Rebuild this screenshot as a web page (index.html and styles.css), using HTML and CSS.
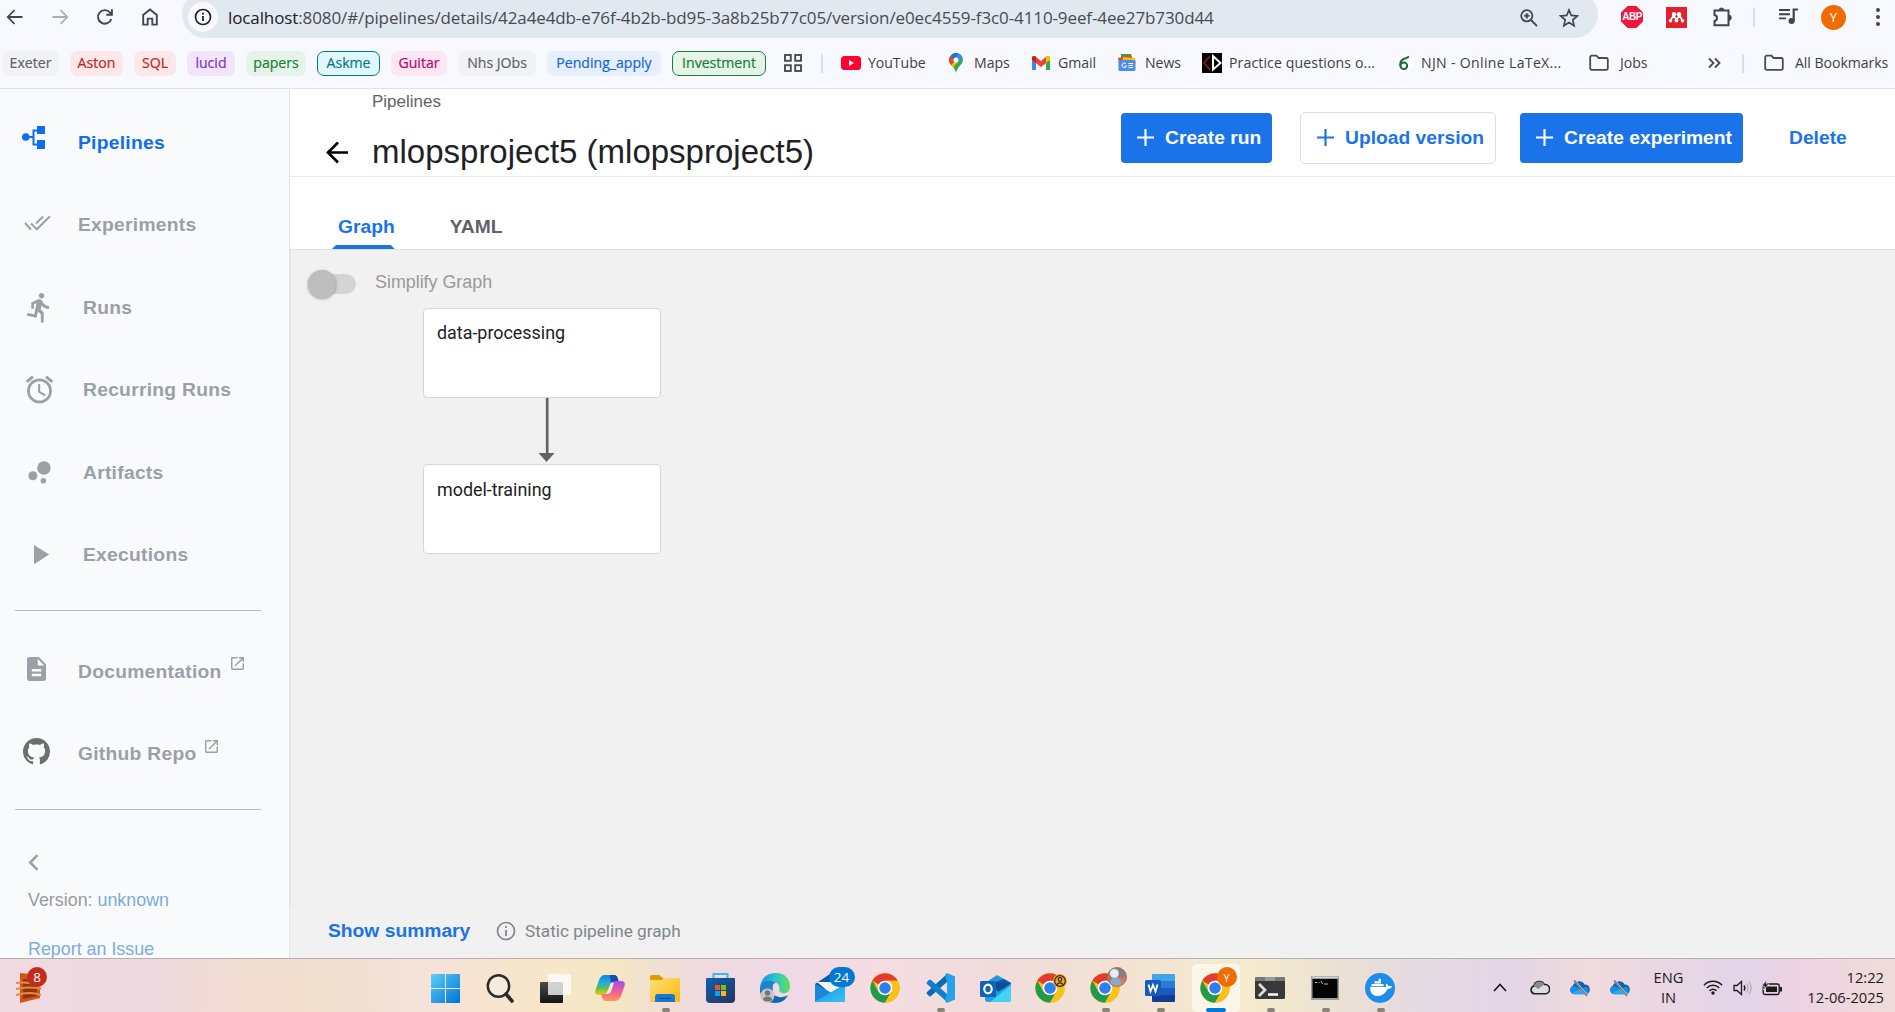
FILE: index.html
```html
<!DOCTYPE html>
<html lang="en">
<head>
<meta charset="utf-8">
<title>mlopsproject5 - Kubeflow Pipelines</title>
<link rel="stylesheet" href="styles.css">
</head>
<body>
<svg class="defs" width="0" height="0" aria-hidden="true">
  <defs>
    <linearGradient id="gWin" x1="0" y1="0" x2="1" y2="1"><stop offset="0" stop-color="#5ad2fb"/><stop offset="1" stop-color="#0072d2"/></linearGradient>
    <linearGradient id="gFolder" x1="0" y1="0" x2="1" y2="1"><stop offset="0" stop-color="#ffe07a"/><stop offset="1" stop-color="#fbb80c"/></linearGradient>
    <linearGradient id="gStore" x1="0" y1="0" x2="1" y2="1"><stop offset="0" stop-color="#0c62b0"/><stop offset="1" stop-color="#29335c"/></linearGradient>
    <linearGradient id="gDark" x1="0" y1="0" x2="0" y2="1"><stop offset="0" stop-color="#4a4a4a"/><stop offset="1" stop-color="#151515"/></linearGradient>
    <linearGradient id="gEdge" x1="0" y1="0" x2="1" y2="0"><stop offset="0" stop-color="#1590dd"/><stop offset=".5" stop-color="#2cc3d2"/><stop offset="1" stop-color="#62e052"/></linearGradient>
    <linearGradient id="gCopA" x1="0" y1="0" x2="0" y2="1"><stop offset="0" stop-color="#1584dc"/><stop offset=".35" stop-color="#18aee8"/><stop offset=".65" stop-color="#5cbb5a"/><stop offset="1" stop-color="#f6d200"/></linearGradient>
    <linearGradient id="gCopB" x1="0" y1="0" x2="0" y2="1"><stop offset="0" stop-color="#9a55ec"/><stop offset=".5" stop-color="#ee5a98"/><stop offset="1" stop-color="#fd9a5a"/></linearGradient>
    <linearGradient id="gMail" x1="0" y1="0" x2="1" y2="1"><stop offset="0" stop-color="#1d8fdf"/><stop offset="1" stop-color="#35c4f4"/></linearGradient>
    <symbol id="chrome" viewBox="0 0 48 48">
      <circle cx="24" cy="24" r="23.5" fill="#fbc116"/>
      <path d="M24 24 3.650 12.250A23.500 23.500 0 0 1 44.350 12.250H24z" fill="#e33b2e"/>
      <path d="M3.650 12.250A23.500 23.500 0 0 0 24 47.500L34.180 29.880 24 24 13.820 29.880z" fill="#229a4c"/>
      <path d="M24 12.250H44.350A23.500 23.500 0 0 1 24 47.500L34.180 29.880z" fill="#fbc116"/>
      <circle cx="24" cy="24" r="11.750" fill="#fff"/>
      <circle cx="24" cy="24" r="9.300" fill="#2f7df0"/>
    </symbol>
    <symbol id="folder" viewBox="0 0 20 18">
      <path d="M1.200 3.200A1.500 1.500 0 0 1 2.700 1.700H7.500L9.500 4H17.300A1.500 1.500 0 0 1 18.800 5.500V14.300A1.500 1.500 0 0 1 17.300 15.800H2.700A1.500 1.500 0 0 1 1.200 14.300z" fill="none" stroke="#474b50" stroke-width="1.800"/>
    </symbol>
    <symbol id="plus" viewBox="0 0 16 16"><path d="M8 0V16M0 8H16" stroke="currentColor" stroke-width="2"/></symbol>
    <symbol id="launch" viewBox="3 3 18 18"><path fill="currentColor" d="M19 19H5V5h7V3H5a2 2 0 0 0-2 2v14a2 2 0 0 0 2 2h14c1.100 0 2-.9 2-2v-7h-2v7zM14 3v2h3.590l-9.830 9.830 1.410 1.410L19 6.410V10h2V3h-7z"/></symbol>
    <symbol id="onedrive" viewBox="0 0 22 18">
      <path d="M5 15A4.200 4.200 0 0 1 3.700 7 6.600 6.600 0 0 1 15.600 5.500 4.900 4.900 0 0 1 17.500 15z" fill="#0f63b6"/>
      <path d="M5 15A4.200 4.200 0 0 1 5 6.700L11 10.500 16.500 7.600A4 4 0 0 1 17.500 15z" fill="#1490df"/>
      <path d="M3 14 11 10.300 20 14A4 4 0 0 1 17.500 15.500H5z" fill="#2aa8ee"/>
      <path d="M5.500 1.500 18.500 17" stroke="#b9c4d4" stroke-width="2"/><path d="M5 1.500 18 17" stroke="#777" stroke-width="1.300"/>
    </symbol>
  </defs>
</svg>

<header class="browser">
  <div class="toolbar">
    <svg class="tb-icon" width="18" height="18" viewBox="0 0 18 18"><path d="M16.500 9H2M8.500 2 1.800 9 8.500 16" fill="none" stroke="#3d4654" stroke-width="1.800"/></svg>
    <svg class="tb-icon" width="18" height="18" viewBox="0 0 18 18"><path d="M1.500 9H16M9.500 2 16.200 9 9.500 16" fill="none" stroke="#a9adb5" stroke-width="1.800"/></svg>
    <svg class="tb-icon" width="18" height="18" viewBox="0 0 18 18"><path d="M15.300 11A6.800 6.800 0 1 1 14 4.500L15.800 6.500M15.900 1.200V6.700H10.300" fill="none" stroke="#3d4654" stroke-width="1.900"/></svg>
    <svg class="tb-icon" width="18" height="18" viewBox="0 0 18 18"><path d="M2.200 16.600V7L9 1.400 15.800 7V16.600H11.300V10.600H6.700V16.600z" fill="none" stroke="#3d4654" stroke-width="1.900"/></svg>
    <div class="omnibox">
      <span class="site-info"><svg width="18" height="18" viewBox="0 0 18 18"><circle cx="9" cy="9" r="7.500" fill="none" stroke="#202124" stroke-width="1.700"/><path d="M9 8V13M9 4.700V6.500" stroke="#202124" stroke-width="1.800"/></svg></span>
      <span class="url"><b>localhost</b>:8080/#/pipelines/details/42a4e4db-e76f-4b2b-bd95-3a8b25b77c05/version/e0ec4559-f3c0-4110-9eef-4ee27b730d44</span>
      <svg class="zoom-icon" width="20" height="20" viewBox="0 0 20 20"><circle cx="7.800" cy="7.800" r="5.600" fill="none" stroke="#43474e" stroke-width="1.800"/><path d="M12 12 18 18.200M7.800 5.200V10.400M5.200 7.800H10.400" stroke="#43474e" stroke-width="1.900"/></svg>
      <svg width="20" height="20" viewBox="0 0 20 20"><path d="M10 2 12.300 7.400 18.300 8 13.800 11.900 15.100 17.700 10 14.600 4.900 17.700 6.200 11.900 1.700 8 7.700 7.400z" fill="none" stroke="#43474e" stroke-width="1.700"/></svg>
    </div>
    <div class="extensions">
      <span class="abp">ABP</span>
      <svg width="21" height="21" viewBox="0 0 21 21"><rect width="21" height="21" fill="#e3202c"/><g fill="#fff"><circle cx="8" cy="7.300" r="2.200"/><circle cx="13" cy="7.300" r="2.200"/><circle cx="4.500" cy="13.800" r="1.800"/><circle cx="10.500" cy="13.500" r="1.900"/><circle cx="16.500" cy="13.800" r="1.800"/></g><path d="M4.500 13.500 7.500 8.500 10.500 12.500 13.500 8.500 16.500 13.500" fill="none" stroke="#fff" stroke-width="1.700"/></svg>
      <svg width="22" height="22" viewBox="0 0 22 22"><path d="M2.500 4.500H16.500V19.300H2.500V15Q5 14.500 5 12T2.500 9z" fill="none" stroke="#3d4654" stroke-width="2"/><path d="M7 4.500A2.500 2.500 0 0 1 12 4.500zM16.500 9A2.500 2.500 0 0 1 16.500 14.500z" fill="#3d4654" stroke="#3d4654"/></svg>
      <i class="bar"></i>
      <svg width="22" height="20" viewBox="0 0 22 20"><path d="M1 3H12M1 7.200H12M1 11.400H8" stroke="#3d4654" stroke-width="1.900"/><circle cx="13.500" cy="14" r="3" fill="#3d4654"/><path d="M15.700 14.500V2.500H20" fill="none" stroke="#3d4654" stroke-width="2.200"/></svg>
      <span class="avatar">Y</span>
      <svg width="6" height="22" viewBox="0 0 6 22"><g fill="#3d4654"><circle cx="3" cy="4" r="2"/><circle cx="3" cy="11" r="2"/><circle cx="3" cy="18" r="2"/></g></svg>
    </div>
  </div>

  <nav class="bookmarks">
    <span class="chip grey">Exeter</span>
    <span class="chip red">Aston</span>
    <span class="chip red">SQL</span>
    <span class="chip purple">lucid</span>
    <span class="chip green">papers</span>
    <span class="chip cyan outlined">Askme</span>
    <span class="chip pink">Guitar</span>
    <span class="chip grey">Nhs JObs</span>
    <span class="chip blue">Pending_apply</span>
    <span class="chip green outlined">Investment</span>
    <svg class="apps" width="18" height="18" viewBox="0 0 18 18"><g fill="none" stroke="#474b50" stroke-width="1.900"><rect x="1" y="1" width="5.800" height="5.800"/><rect x="11.200" y="1" width="5.800" height="5.800"/><rect x="1" y="11.200" width="5.800" height="5.800"/><rect x="11.200" y="11.200" width="5.800" height="5.800"/></g></svg>
    <i class="bar"></i>
    <span class="mark yt"><svg width="20" height="14" viewBox="0 0 20 14"><rect width="20" height="14" rx="3.500" fill="#f03"/><path d="M8 4 13 7 8 10z" fill="#fff"/></svg>YouTube</span>
    <span class="mark maps"><svg width="14" height="20" viewBox="0 0 14 20"><path d="M7 0A7 7 0 0 0 0 7C0 11.500 5.500 13 7 20 8.500 13 14 11.500 14 7A7 7 0 0 0 7 0z" fill="#34a853"/><path d="M9.500.5A7 7 0 0 1 13.500 4.500L9 9 6.500 4z" fill="#4285f4"/><path d="M1.500 2.700 5 6 2.500 12.500A7 7 0 0 1 1.500 2.700z" fill="#e94335"/><path d="M2.200 12.200 9.200 4.500 9 9 4 14.200z" fill="#fbbc04"/><path d="M2 2.200A7 7 0 0 1 9.500.5L5 6z" fill="#1a73e8"/><circle cx="7" cy="7" r="2.500" fill="#fff"/></svg>Maps</span>
    <span class="mark gmail"><svg width="18" height="14" viewBox="0 0 18 14"><path d="M0 2.500V14H4V5z" fill="#4285f4"/><path d="M18 2.500V14H14V5z" fill="#34a853"/><path d="M0 2A2 2 0 0 1 3.500.6L9 5 14.500.6A2 2 0 0 1 18 2V4L9 11 0 4z" fill="#ea4335"/><path d="M14 1V7L18 4V2A2 2 0 0 0 14.500.6z" fill="#fbbc04"/><path d="M0 4 4 7V1L3.500.6A2 2 0 0 0 0 2z" fill="#c5221f"/></svg>Gmail</span>
    <span class="mark news"><svg width="18" height="17" viewBox="0 0 18 17"><path d="M3 0H13L15 7H3z" fill="#2fa352"/><path d="M0 4 13 1 15 9H1z" fill="#e94335"/><path d="M5 3 17 4 18 9H4z" fill="#fbbc04"/><rect x=".5" y="6" width="17" height="11" rx="1.500" fill="#4b8bf5"/><path d="M10.500 9.500H15M10.500 11.500H15M10.500 13.500H15M8 9.800A2.300 2.300 0 1 0 8.500 12H6.500" fill="none" stroke="#fff"/></svg>News</span>
    <span class="mark quiz"><svg width="20" height="20" viewBox="0 0 20 20"><rect width="20" height="20" fill="#000"/><path d="M8 3 2 10 8 17" fill="none" stroke="#a5161b" stroke-width="1.500"/><path d="M11 3V16.500L18.500 10z" fill="none" stroke="#fff" stroke-width="2"/></svg>Practice questions o...</span>
    <span class="mark njn"><svg width="18" height="20" viewBox="0 0 18 20"><circle cx="9" cy="10" r="9" fill="#fff"/><ellipse cx="8.800" cy="12.800" rx="3.400" ry="3.300" fill="none" stroke="#1c6b3c" stroke-width="2"/><path d="M5.400 13Q4.500 8 8.500 6Q11 5.500 14 3.700" fill="none" stroke="#1c6b3c" stroke-width="2"/></svg>NJN - Online LaTeX...</span>
    <span class="mark jobs"><svg width="20" height="18"><use href="#folder"/></svg>Jobs</span>
    <svg class="more" width="13" height="12" viewBox="0 0 13 12"><path d="M1 1.500 5.500 6 1 10.500M7 1.500 11.500 6 7 10.500" fill="none" stroke="#474b50" stroke-width="1.800"/></svg>
    <i class="bar"></i>
    <span class="mark all"><svg width="20" height="18"><use href="#folder"/></svg>All Bookmarks</span>
  </nav>
</header>

<div class="app">
  <aside class="sidebar">
    <a class="nav active"><svg width="23" height="23" viewBox="0 0 23 23"><circle cx="3.800" cy="11" r="3.800" fill="currentColor"/><path d="M15 0H23V8H15zM15 14H23V23H15z" fill="currentColor"/><path d="M4 11H11M16 4.500H11.500V18.500H16" fill="none" stroke="currentColor" stroke-width="2"/></svg><span>Pipelines</span></a>
    <a class="nav exp"><svg width="27" height="16" viewBox="0 0 27 16"><path d="M1 8 7 14.500M7 8.500 12.800 14.300 26 1.200M12 8.600 19 1.500" fill="none" stroke="currentColor" stroke-width="2"/></svg><span>Experiments</span></a>
    <a class="nav wide"><svg width="33" height="33" viewBox="0 0 24 24"><path fill="currentColor" d="M13.490 5.480c1.100 0 2-.9 2-2s-.9-2-2-2-2 .9-2 2 .9 2 2 2zm-3.600 13.900l1-4.400 2.100 2v6h2v-7.500l-2.100-2 .6-3c1.300 1.500 3.300 2.500 5.500 2.500v-2c-1.900 0-3.500-1-4.300-2.400l-1-1.600c-.4-.6-1-1-1.700-1-.3 0-.5.100-.8.100l-5.200 2.200v4.700h2v-3.400l1.800-.7-1.600 8.100-4.900-1-.4 2 7 1.400z"/></svg><span>Runs</span></a>
    <a class="nav wide"><svg width="33" height="33" viewBox="0 0 24 24"><path fill="currentColor" d="M22 5.720l-4.600-3.860-1.290 1.530 4.600 3.860L22 5.720zM7.880 3.390L6.600 1.860 2 5.710l1.290 1.530 4.590-3.850zM12.500 8H11v6l4.750 2.850.75-1.230-4-2.370V8zM12 4a9 9 0 1 0 0 18 9 9 0 0 0 0-18zm0 16c-3.870 0-7-3.130-7-7s3.130-7 7-7 7 3.130 7 7-3.130 7-7 7z"/></svg><span>Recurring Runs</span></a>
    <a class="nav wide"><svg width="33" height="33" viewBox="0 0 24 24"><g fill="currentColor"><circle cx="7.200" cy="14.400" r="3.300"/><circle cx="14.800" cy="18" r="2"/><circle cx="15.200" cy="8.800" r="4.900"/></g></svg><span>Artifacts</span></a>
    <a class="nav wide"><svg width="33" height="33" viewBox="0 0 24 24"><path d="M8 5v14l11-7z" fill="currentColor"/></svg><span>Executions</span></a>
    <hr>
    <a class="nav doc"><svg width="19" height="24" viewBox="4 2 16 20" preserveAspectRatio="none"><path fill="currentColor" d="M14 2H6c-1.100 0-2 .9-2 2v16c0 1.100.9 2 2 2h12c1.100 0 2-.9 2-2V8l-6-6zm2 16H8v-2h8v2zm0-4H8v-2h8v2zm-3-5V3.500L18.500 9H13z"/></svg><span>Documentation</span><svg class="launch" width="13" height="13"><use href="#launch"/></svg></a>
    <a class="nav git"><svg width="27" height="27" viewBox="0 0 16 16"><path fill="#6e6e6e" fill-rule="evenodd" d="M8 0C3.580 0 0 3.580 0 8c0 3.540 2.290 6.530 5.470 7.590.4.070.55-.17.55-.38 0-.19-.01-.82-.01-1.490-2.010.37-2.530-.49-2.690-.94-.09-.23-.48-.94-.82-1.130-.28-.15-.68-.52-.01-.53.63-.01 1.080.58 1.230.82.72 1.210 1.870.87 2.330.66.07-.52.28-.87.51-1.070-1.780-.2-3.640-.89-3.640-3.950 0-.87.310-1.590.82-2.150-.08-.2-.36-1.020.08-2.120 0 0 .67-.21 2.200.82.64-.18 1.320-.27 2-.27s1.360.09 2 .27c1.530-1.040 2.200-.82 2.200-.82.44 1.100.16 1.920.08 2.120.51.56.82 1.270.82 2.150 0 3.070-1.870 3.750-3.650 3.950.29.25.54.73.54 1.480 0 1.070-.01 1.930-.01 2.200 0 .21.15.46.55.38A8.010 8.010 0 0 0 16 8c0-4.420-3.580-8-8-8z"/></svg><span>Github Repo</span><svg class="launch" width="13" height="13"><use href="#launch"/></svg></a>
    <hr>
    <svg class="collapse" width="11" height="17" viewBox="0 0 11 17"><path d="M9.500 1.200 2.200 8.500 9.500 15.800" fill="none" stroke="#9aa0a6" stroke-width="2.600"/></svg>
    <p class="meta">Version: <a>unknown</a></p>
    <p class="meta"><a>Report an Issue</a></p>
  </aside>

  <main class="page">
    <div class="page-head">
      <div class="titles">
        <div class="crumb">Pipelines</div>
        <div class="title"><svg width="23" height="23" viewBox="0 0 23 23"><path d="M22 11.500H2.500M12 1.500 2 11.500 12 21.500" fill="none" stroke="#000" stroke-width="2.700"/></svg><h1>mlopsproject5 (mlopsproject5)</h1></div>
      </div>
      <div class="actions">
        <button class="btn solid run"><svg width="17" height="17"><use href="#plus"/></svg>Create run</button>
        <button class="btn line"><svg width="17" height="17"><use href="#plus"/></svg>Upload version</button>
        <button class="btn solid experiment"><svg width="17" height="17"><use href="#plus"/></svg>Create experiment</button>
        <button class="btn text">Delete</button>
      </div>
    </div>
    <div class="tabs"><span class="tab on">Graph</span><span class="tab">YAML</span></div>
    <section class="canvas">
      <div class="switch-row"><span class="switch"><i></i></span><span>Simplify Graph</span></div>
      <div class="graph">
        <div class="node">data-processing</div>
        <svg class="edge" width="17" height="66" viewBox="0 0 17 66"><path d="M9.200 0V56" stroke="#5f6368" stroke-width="2.700"/><path d="M.5 55H16.500L8.500 64z" fill="#5f6368"/></svg>
        <div class="node">model-training</div>
      </div>
      <div class="footer">
        <b>Show summary</b>
        <svg width="20" height="20" viewBox="0 0 20 20"><circle cx="10" cy="10" r="8.500" fill="none" stroke="#80868b" stroke-width="1.700"/><path d="M10 9V15M10 5V7" stroke="#80868b" stroke-width="1.800"/></svg>
        <span>Static pipeline graph</span>
      </div>
    </section>
  </main>
</div>

<footer class="taskbar">
  <div class="widget">
    <svg width="27" height="30" viewBox="0 0 27 30"><path d="M4 0 24 2V25L4 30z" fill="#d4550f"/><path d="M7 6 21 7V23L7 26z" fill="#8f3606"/><path d="M0 10Q14 8 25 15M0 16Q14 13 25 16M0 22Q14 18 25 22" fill="none" stroke="#ec874a" stroke-width="2"/></svg>
    <span class="badge">8</span>
  </div>
  <div class="tasks">
    <div class="task"><svg width="29" height="29" viewBox="0 0 29 29"><path d="M0 1A1 1 0 0 1 1 0H14V14H0zM15 0H28A1 1 0 0 1 29 1V14H15zM0 15H14V29H1A1 1 0 0 1 0 28zM15 15H29V28A1 1 0 0 1 28 29H15z" fill="url(#gWin)"/></svg></div>
    <div class="task"><svg width="29" height="29" viewBox="0 0 29 29"><circle cx="12.500" cy="12" r="10.700" fill="#f5ecdd" stroke="#2b2b2b" stroke-width="2.500"/><path d="M20 20 26 27" stroke="#2b2b2b" stroke-width="3.600" stroke-linecap="round"/></svg></div>
    <div class="task"><svg width="31" height="29" viewBox="0 0 31 29"><rect x="0" y="8" width="23" height="21" rx="1" fill="url(#gDark)"/><rect x="8" y="0" width="23" height="21" rx="1" fill="#fff" opacity=".76"/></svg></div>
    <div class="task"><svg width="30" height="29" viewBox="0 0 30 29"><path d="M10 1H19Q22 1 23 5L24 9H19Q17 9 16 12L13 18Q12 21 8 21H4Q-1 21 .5 16L4 6Q6 1 10 1z" fill="url(#gCopA)"/><path d="M15 1H19Q22 1 23 5L24 9H19Q17 9 16 11z" fill="#1c48b8"/><path d="M20 27H11Q8 27 7 23L6.500 20H11Q13 20 14 16L17 10Q18 7 22 7H26Q31 7 29.500 12L26 22Q24 27 20 27z" fill="url(#gCopB)"/><path d="M12 18 16 8.500H19L16 18Q15 20 11 20z" fill="#f5e5dc"/></svg></div>
    <div class="task open"><svg width="30" height="27" viewBox="0 0 30 27"><path d="M0 1.500A1.500 1.500 0 0 1 1.500 0H9L13 3V8H0z" fill="#df9c05"/><path d="M0 5H12L14 3H29A1 1 0 0 1 30 4V26A1 1 0 0 1 29 27H1A1 1 0 0 1 0 26z" fill="url(#gFolder)"/><path d="M5 27V22A3 3 0 0 1 8 19H22A3 3 0 0 1 25 22V27z" fill="#1579cd"/><path d="M9 23.500H21" stroke="#0b4f91"/></svg></div>
    <div class="task"><svg width="29" height="30" viewBox="0 0 29 30"><path d="M7.500 7V1H21.500V7" fill="none" stroke="#35b9ee" stroke-width="2"/><path d="M0 6A1 1 0 0 1 1 5H28A1 1 0 0 1 29 6V26A4 4 0 0 1 25 30H4A4 4 0 0 1 0 26z" fill="url(#gStore)"/><path d="M9 12H14V17H9z" fill="#f35325"/><path d="M15 12H20V17H15z" fill="#81bc06"/><path d="M9 18H14V23H9z" fill="#05a6f0"/><path d="M15 18H20V23H15z" fill="#ffba08"/></svg></div>
    <div class="task"><svg width="31" height="30" viewBox="0 0 31 30"><path d="M0 15C1 5 7 0 16 0S30 6 30 13C30 19 26 21 22 20 18 19 20 17 19 13 17 7 5 6 0 15z" fill="url(#gEdge)"/><path d="M0 15C2 9 9 7 14 10 10 12 10 17 13 21 17 25 24 25 28 22 26 27 21 30 15 30 6 30-1 24 0 15z" fill="#1167b5"/><path d="M0 15C2 7 12 6 16 10 13 10 12 13 13 18L5 20Q0 19 0 15z" fill="#1c83cf"/><circle cx="7.500" cy="22.500" r="7" fill="#c9c5c3"/><circle cx="7.500" cy="20" r="2.700" fill="#777"/><path d="M3 27Q3 23.500 7.500 23.500T12 27Q7.500 30 3 27z" fill="#777"/></svg></div>
    <div class="task"><svg class="mail-icon" width="30" height="28" viewBox="0 0 30 28"><path d="M0 10 15 0 30 10V16H0z" fill="#0e5ba8"/><path d="M2 8H28V12L15 19z" fill="#f4f4f4"/><path d="M0 10 17 19 0 28z" fill="#1c88d9"/><path d="M30 10 0 28H30z" fill="url(#gMail)"/></svg><span class="badge count">24</span></div>
    <div class="task"><svg width="30" height="30"><use href="#chrome"/></svg></div>
    <div class="task open"><svg width="30" height="30" viewBox="0 0 30 30"><path d="M22 1 2 19Q1 20 2 21L4 23Q5 24 6 23L22 9z" fill="#0b6cb4"/><path d="M22 29 2 11Q1 10 2 9L4 7Q5 6 6 7L22 21z" fill="#0f80cc"/><path d="M22 0 30 3.500V26.500L22 30 20 28 22 21V9L20 2z" fill="#27a2ea"/></svg></div>
    <div class="task"><svg width="31" height="27" viewBox="0 0 31 27"><path d="M5 8 17 0 31 8V14H5z" fill="#2496dd"/><path d="M12 8 24 4 31 8 18 18z" fill="#0c59a4"/><path d="M5 14H31V24A3 3 0 0 1 28 27H8A3 3 0 0 1 5 24z" fill="#1f9fe4"/><path d="M31 10V24A3 3 0 0 1 28 27H10z" fill="#45d2f6"/><path d="M13 8 31 8 18 17z" fill="#0c4f96"/><rect x="0" y="6" width="16" height="16" rx="1.500" fill="#0f64b5"/><ellipse cx="8" cy="14" rx="3.700" ry="4.300" fill="none" stroke="#fff" stroke-width="2.200"/></svg></div>
    <div class="task"><svg width="30" height="30"><use href="#chrome"/></svg><span class="profile gold"><svg width="12" height="12" viewBox="0 0 12 12"><g fill="none" stroke="#3a2a12" stroke-width="1.200"><circle cx="6" cy="6" r="5.300"/><circle cx="6" cy="4.500" r="1.800"/><path d="M2.500 9.800Q6 5.800 9.500 9.800"/></g></svg></span></div>
    <div class="task open"><svg width="30" height="30"><use href="#chrome"/></svg><span class="profile photo"></span></div>
    <div class="task open"><svg width="30" height="28" viewBox="0 0 30 28"><path d="M7 1A1 1 0 0 1 8 0H29A1 1 0 0 1 30 1V7H7z" fill="#41a5ee"/><path d="M7 7H30V14H7z" fill="#2b7cd3"/><path d="M7 14H30V21H7z" fill="#185abd"/><path d="M7 21H30V27A1 1 0 0 1 29 28H8A1 1 0 0 1 7 27z" fill="#103f91"/><rect y="6" width="16" height="16" rx="1.500" fill="#185abd"/><path d="M3.500 10.500 5.500 17.500 8 11 10.500 17.500 12.500 10.500" fill="none" stroke="#fff" stroke-width="1.800"/></svg></div>
    <div class="task current"><svg width="30" height="30"><use href="#chrome"/></svg><span class="profile orange">Y</span></div>
    <div class="task open"><svg width="30" height="22" viewBox="0 0 30 22"><rect width="30" height="22" rx="1.500" fill="#383838"/><path d="M0 1.500A1.500 1.500 0 0 1 1.500 0H28.500A1.500 1.500 0 0 1 30 1.500V4H0z" fill="#777"/><path d="M10 0H20V4H10z" fill="#999"/><path d="M4 7 10 13 4 19" fill="none" stroke="#ddd" stroke-width="2.800"/><path d="M13 17.500H23" stroke="#fff" stroke-width="2.500"/></svg></div>
    <div class="task open"><svg width="28" height="24" viewBox="0 0 28 24"><rect width="28" height="24" rx="1" fill="#98a0a6"/><rect x="1.500" y="3" width="25" height="19" fill="#050505"/><path d="M1 1.300H27" stroke="#d3d7da" stroke-width="1.300"/><path d="M4 6.500H6M8 6V7M10 5 11.500 8M13 8H17" stroke="#bbb" fill="none"/></svg></div>
    <div class="task open"><svg width="30" height="30" viewBox="0 0 30 30"><circle cx="15" cy="15" r="15" fill="#1d8ceb"/><path d="M5 14H21Q21.500 12 20.500 10.500 23 11 23.500 13 26 12.500 27 13.500 26 16 22.500 16 19.500 23 12.500 23 5 23 5 14z" fill="#fff"/><path d="M6.500 11H18.500V13.300H6.500zM9.500 8.300H16V10.500H9.500zM13.700 5.700H16V8H13.700z" fill="#fff"/></svg></div>
  </div>
  <div class="tray">
    <svg width="14" height="9" viewBox="0 0 14 9"><path d="M1 8 7 1.500 13 8" fill="none" stroke="#1b1b1b" stroke-width="1.700"/></svg>
    <svg width="20" height="15" viewBox="0 0 20 15"><path d="M4.500 13.800A4 4 0 0 1 4 6 5.500 5.500 0 0 1 14.300 4.500 4.500 4.500 0 0 1 15.500 13.800z" fill="#ddd" stroke="#222" stroke-width="1.600"/><path d="M4 6A5.500 5.500 0 0 1 14.300 4.500L8 9z" fill="#8b8b8b"/></svg>
    <svg width="22" height="18"><use href="#onedrive"/></svg>
    <svg width="22" height="18"><use href="#onedrive"/></svg>
    <div class="lang"><span>ENG</span><span>IN</span></div>
    <svg width="20" height="15" viewBox="0 0 20 15"><path d="M1 5.200A12.500 12.500 0 0 1 19 5.200M3.800 8A8.500 8.500 0 0 1 16.200 8M6.500 10.800A5 5 0 0 1 13.500 10.800" fill="none" stroke="#1b1b1b" stroke-width="1.500"/><circle cx="10" cy="13" r="1.700" fill="#1b1b1b"/></svg>
    <svg width="20" height="16" viewBox="0 0 20 16"><path d="M1 5.500H4L8.500 1.500V14.500L4 10.500H1z" fill="none" stroke="#1b1b1b" stroke-width="1.300"/><path d="M11 5.500Q12.700 8 11 10.500" fill="none" stroke="#1b1b1b" stroke-width="1.400"/><path d="M13.500 3.500Q16.300 8 13.500 12.500M16 1.500Q20 8 16 14.500" fill="none" stroke="#b3a6b4" stroke-width="1.200"/></svg>
    <svg width="21" height="16" viewBox="0 0 21 16"><rect x="1.200" y="4" width="16" height="10.500" rx="2" fill="none" stroke="#1b1b1b" stroke-width="1.400"/><path d="M4 6.500H15V12H4zM18 7H20V11.500H18z" fill="#1b1b1b"/><path d="M4.500 0 0 6H2.500L1.500 10 7 4H4z" fill="#1b1b1b" stroke="#e6d5e8" stroke-width=".7"/></svg>
    <div class="clock"><span>12:22</span><span>12-06-2025</span></div>
  </div>
</footer>
</body>
</html>
```
FILE: styles.css
```css
* { box-sizing: border-box; }
body {
  margin: 0;
  width: 1895px;
  height: 1012px;
  overflow: hidden;
  display: flex;
  flex-direction: column;
  background: #fff;
  font-family: "Liberation Sans", Arial, sans-serif;
}
svg { display: block; flex: none; }
.defs { position: absolute; }

/* Browser chrome */
.browser {
  height: 89px;
  flex: none;
  background: #f8f9fe;
  border-bottom: 1px solid #dfe1ec;
  font-family: "Open Sans", "Noto Sans", sans-serif;
}
.toolbar {
  height: 38px;
  display: grid;
  grid-template-columns: 45px 45px 45px 41px 1416px 1fr;
  padding-left: 6px;
}
.tb-icon { margin-top: 8px; }
.omnibox {
  height: 47px;
  margin-top: -9px;
  padding: 9px 19px 0 6px;
  display: flex;
  align-items: center;
  border-radius: 24px;
  background: #e2e8f0;
}
.site-info {
  width: 30px;
  height: 30px;
  margin-right: 10px;
  margin-bottom: 4px;
  display: grid;
  place-items: center;
  border-radius: 50%;
  background: #f8f9fe;
}
.url {
  flex: 1;
  margin-bottom: 4px;
  font-size: 17px;
  letter-spacing: -.11px;
  white-space: nowrap;
  color: #474b50;
}
.url b { font-weight: 400; color: #202124; }
.omnibox > svg { margin-bottom: 3px; }
.zoom-icon { margin-right: 20px; }
.extensions {
  height: 34px;
  display: grid;
  grid-template-columns: 45px 46px 41px 25px 43px 54px 6px;
  padding-left: 23px;
  align-items: center;
}
.abp {
  width: 22px;
  height: 22px;
  line-height: 22px;
  text-align: center;
  color: #fff;
  font: 700 10px/22px "Liberation Sans", Arial, sans-serif;
  letter-spacing: -.5px;
  background: #f0163c;
  clip-path: polygon(30% 0, 70% 0, 100% 30%, 100% 70%, 70% 100%, 30% 100%, 0 70%, 0 30%);
}
.bar { width: 2px; height: 19px; background: #cfe1fb; }
.avatar {
  width: 25px;
  height: 25px;
  line-height: 25px;
  border-radius: 50%;
  text-align: center;
  font-size: 13px;
  color: #fff;
  background: #ef6c00;
}
.bookmarks {
  height: 50px;
  padding-left: 2px;
  display: grid;
  grid-template-columns: 68px 64px 53px 59px 71px 74px 67px 89px 125px 112px 37px 20px 108px 83px 86px 84px 194px 193px 119px 34px 22px 131px;
  align-items: center;
  font-size: 14.1px;
  white-space: nowrap;
  color: #3c4043;
}
.chip {
  height: 25px;
  margin-right: 11px;
  display: flex;
  align-items: center;
  justify-content: center;
  padding-bottom: 1px;
  border-radius: 7px;
  font-weight: 500;
  -webkit-text-stroke: .2px currentColor;
}
.grey { background: #f0f2f4; color: #5f6368; }
.red { background: #fce8e6; color: #c5221f; }
.purple { background: #f2e6fe; color: #8430ce; }
.green { background: #e5f3e9; color: #188038; }
.cyan { background: #e2f7fb; color: #007b83; }
.pink { background: #fde7f3; color: #c2006b; }
.blue { background: #e6effd; color: #1967d2; }
.outlined { border: 1.5px solid currentColor; }
.chip:nth-child(10) { margin-right: 18px; }
.mark { display: flex; align-items: center; gap: 7px; letter-spacing: -.05px; padding-bottom: 1px; }
.maps, .jobs, .all { gap: 11px; }
.gmail { gap: 8px; }
.news { gap: 9px; }
.njn { gap: 8px; margin-left: -1px; letter-spacing: .32px; }
.quiz { letter-spacing: .12px; }

/* Application */
.app { height: 869px; flex: none; display: flex; overflow: hidden; }
.sidebar {
  width: 290px;
  flex: none;
  padding-top: 12px;
  background: #f9fafc;
  border-right: 1px solid #e4e4e4;
}
.nav {
  height: 82.5px;
  display: grid;
  grid-template-columns: 56px auto auto 1fr;
  align-items: center;
  padding-left: 22px;
  font-size: 19.25px;
  font-weight: 700;
  letter-spacing: .27px;
  color: #9aa0a6;
}
.nav > span { padding-top: 1px; }
.nav > svg:first-child { margin-bottom: 9px; }
.active { color: #0d6ef0; }
.exp { padding-left: 24px; grid-template-columns: 54px auto; justify-content: start; }
.exp > svg:first-child { margin-bottom: 4px; }
.wide { grid-template-columns: 60px auto; padding-left: 23px; justify-content: start; }
.wide > svg:first-child { margin-bottom: 0; }
.doc { padding-left: 27px; grid-template-columns: 51px auto auto 1fr; }
.doc > svg:first-child { margin-bottom: 4px; }
.git { padding-left: 23px; grid-template-columns: 55px auto auto 1fr; }
.git > svg:first-child { margin-bottom: 4px; }
.launch { margin: 0 0 15px 9px; }
.sidebar hr {
  width: 246px;
  height: 1px;
  margin: 14px 0 19px 15px;
  border: 0;
  background: #b8bbbe;
}
.sidebar hr + .collapse { margin: 44px 0 0 28px; }
.meta { margin: 0; padding-left: 28px; height: 49px; line-height: 22px; font-size: 17.875px; color: #9a9a9a; }
.collapse + .meta { margin-top: 18px; }
.meta a { color: #7aaddd; }

.page { flex: 1; min-width: 0; display: flex; flex-direction: column; }
.page-head {
  height: 88px;
  display: flex;
  justify-content: space-between;
  border-bottom: 1px solid #ececec;
}
.titles { padding-left: 36px; }
.crumb { padding: 3px 0 0 46px; font-size: 17px; line-height: 20px; color: #5f6368; }
.title { display: flex; align-items: center; gap: 23px; margin-top: 20px; }
.title h1 { margin: 0; font-size: 33px; line-height: 40px; font-weight: 400; color: #202124; }
.actions { display: flex; height: 51px; margin: 23px 48px 0 0; align-items: center; }
.btn {
  height: 50px;
  padding: 0 0 0 16px;
  display: flex;
  align-items: center;
  gap: 11px;
  border: 0;
  border-radius: 4px;
  background: none;
  font: 700 19.25px "Liberation Sans", Arial, sans-serif;
  white-space: nowrap;
  color: #1a73e8;
}
.solid { background: #1a73e8; color: #fff; }
.run { width: 151px; }
.line { width: 196px; height: 52px; margin: 0 24px 0 28px; padding-left: 16px; border: 1px solid #dadce0; border-radius: 5px; }
.experiment { width: 223px; }
.text { padding: 0 0 0 46px; width: 104px; }
.tabs { height: 73px; flex: none; display: flex; padding-left: 42px; border-bottom: 1px solid #e0e0e0; }
.tab {
  position: relative;
  height: 72px;
  margin-right: 49px;
  padding: 38px 0 0 6px;
  font-size: 19.25px;
  line-height: 24px;
  font-weight: 700;
  color: #5f6368;
}
.on { color: #1a73e8; }
.on::after {
  content: "";
  position: absolute;
  inset: auto 0 0 0;
  height: 4px;
  background: #1a73e8;
  clip-path: polygon(4px 0, calc(100% - 4px) 0, 100% 100%, 0 100%);
}
.canvas {
  flex: 1;
  display: flex;
  flex-direction: column;
  background: linear-gradient(#e2e2e2, #e2e2e2) 0 0 / 1px 657px no-repeat #f1f1f1;
}
.switch-row {
  height: 58px;
  padding: 6px 0 0 18px;
  display: flex;
  align-items: center;
  gap: 19px;
  font-size: 17.875px;
  color: #999;
}
.switch { position: relative; width: 48px; height: 20px; border-radius: 10px; background: #d4d4d4; margin-top: 3px; }
.switch i {
  position: absolute;
  left: 0;
  top: -4px;
  width: 28px;
  height: 28px;
  border-radius: 50%;
  background: #bdbdbd;
  box-shadow: 0 1px 3px rgba(0,0,0,.35);
}
.graph { width: 238px; margin-left: 133px; display: flex; flex-direction: column; }
.node {
  height: 90px;
  padding: 13px 13px;
  border: 1px solid #d6d6d6;
  border-radius: 4px;
  background: #fff;
  font: 17.9px/22px Roboto, sans-serif;
  color: #202124;
}
.node:last-child { padding-top: 14px; }
.edge { margin-left: 115px; }
.footer {
  margin-top: auto;
  height: 54px;
  padding-left: 38px;
  display: flex;
  align-items: center;
  font: 17.2px Roboto, sans-serif;
  color: #80868b;
}
.footer b { font: 700 19.25px "Liberation Sans", Arial, sans-serif; color: #1a73e8; width: 168px; }
.footer svg { margin-right: 9px; }

/* Taskbar */
.taskbar {
  height: 54px;
  flex: none;
  display: flex;
  border-top: 1px solid #b9aeb2;
  background: linear-gradient(90deg, #f0dbe2 0, #edd8e0 150px, #f1ddd0 240px, #f1dfcf 330px, #f5e2da 420px, #f8e6cb 530px, #f5e7c4 610px, #efdade 700px, #f0d9e6 800px, #f5dde1 880px, #f1dcdc 1000px, #f2e3d2 1120px, #f6ebcf 1250px, #ebe1d3 1340px, #e4dae2 1420px, #e3d5e7 1510px, #f0dadb 1590px, #e8d6e4 1680px, #e3d4e9 1740px, #edd2e3 1800px, #f0dcda 1895px);
  font-family: "Open Sans", "Noto Sans", sans-serif;
}
.widget { position: relative; width: 417.5px; padding: 14px 0 0 16px; }
.badge {
  position: absolute;
  left: 27px;
  top: 8px;
  width: 20px;
  height: 20px;
  line-height: 20px;
  border-radius: 10px;
  text-align: center;
  font-size: 13.5px;
  color: #fff;
  background: #c42b1c;
}
.badge.count { left: 26px; width: 26px; background: #0078d4; }
.tasks { width: 992px; display: grid; grid-template-columns: repeat(18, 55px); }
.task { position: relative; display: grid; place-items: center; height: 58px; }
.open::after, .current::after {
  content: "";
  position: absolute;
  left: 24px;
  bottom: 5px;
  width: 8px;
  height: 4px;
  border-radius: 2px;
  background: #8a8177;
}
.current::after { left: 18px; width: 20px; background: #0078d4; }
.current::before {
  content: "";
  position: absolute;
  inset: 5px 3px 5px 4px;
  border-radius: 5px;
  background: #fcf6ea;
}
.current svg { position: relative; }
.profile {
  position: absolute;
  left: 29px;
  top: 8px;
  width: 20px;
  height: 20px;
  display: grid;
  place-items: center;
  border-radius: 50%;
  font-size: 11px;
  color: #fff;
}
.gold { background: #eeaa32; width: 14px; height: 14px; left: 30px; top: 15px; }
.photo {
  border: 1px solid #96706a;
  background:
    radial-gradient(circle at 35% 30%, #e3edf5 0 22%, transparent 30%),
    radial-gradient(circle at 42% 80%, #91a8c4 0 25%, transparent 35%),
    radial-gradient(circle at 70% 30%, #7d8288 0 15%, transparent 25%),
    linear-gradient(155deg, #8b8580 15%, #b06b50 45%, #d98865 90%);
}
.orange { background: #ef6c00; }
.tray {
  flex: 1;
  display: grid;
  grid-template-columns: 37px 39px 40px 45px 49px 30px 29px 37px 1fr;
  align-items: center;
  padding: 4px 11px 0 83px;
  font-size: 14.7px;
  color: #1b1b1b;
}
.lang, .clock { display: flex; flex-direction: column; line-height: 20px; }
.lang { width: 30px; text-align: center; margin-top: -2px; }
.clock { text-align: right; margin-top: -2px; }
```
